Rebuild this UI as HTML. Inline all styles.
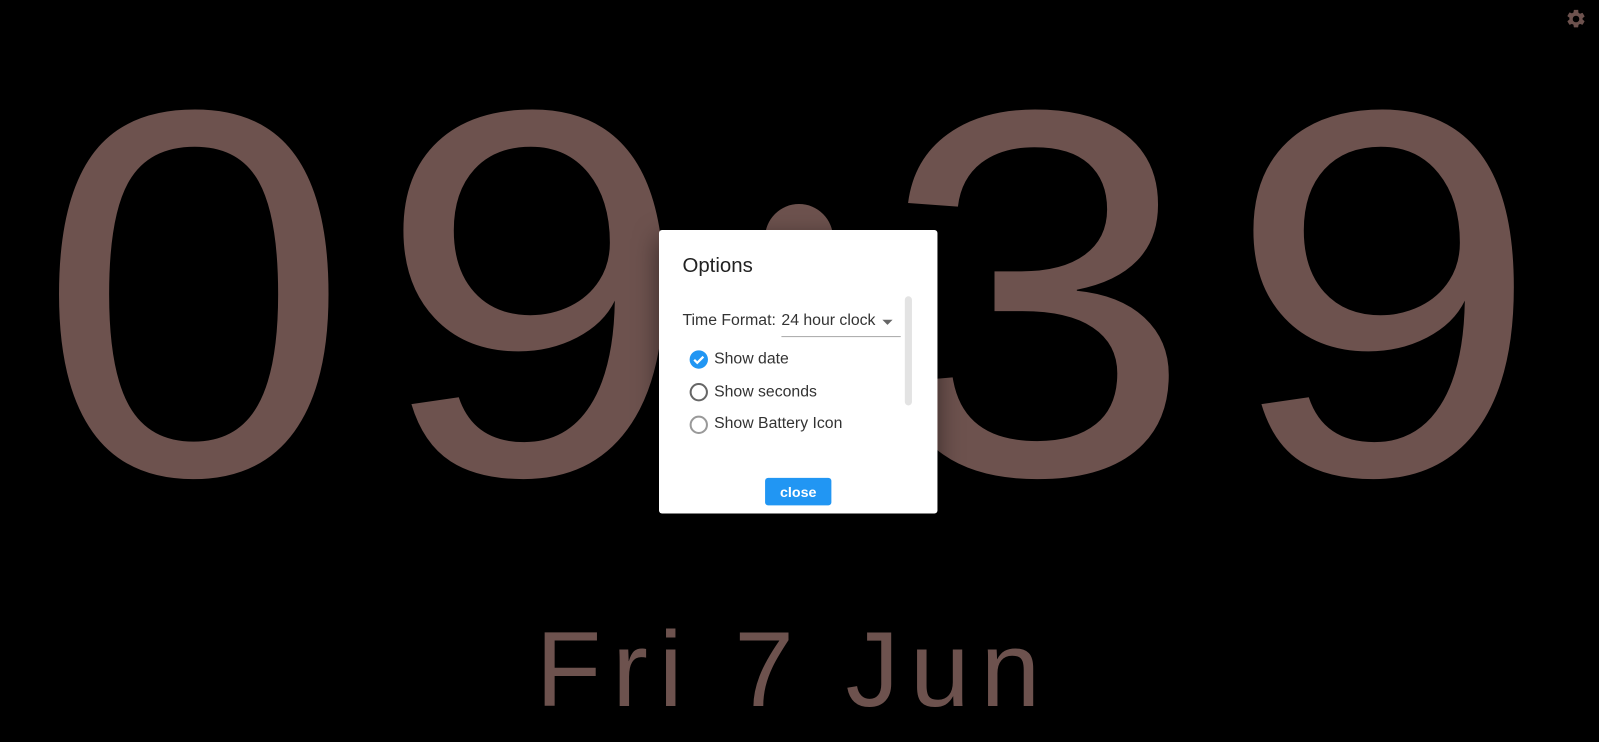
<!DOCTYPE html>
<html><head><meta charset="utf-8"><style>
html,body{margin:0;padding:0;background:#000;width:1599px;height:742px;overflow:hidden;font-family:"Liberation Sans",Roboto,sans-serif}
.d{position:absolute;color:#6d524e;font-size:522px;line-height:1;top:32px;transform:scaleX(1.08);transform-origin:0 0}
.dot{position:absolute;width:68px;height:68px;border-radius:50%;background:#6d524e;left:765px}
.date{position:absolute;left:0;width:1587px;text-align:center;top:611px;font-size:107px;color:#6d524e;letter-spacing:11px;line-height:1.1}
.dlg{position:absolute;left:659px;top:230px;width:273px;height:278px;background:#fff;border-radius:3px;box-shadow:0 8px 24px rgba(0,0,0,.5);color:#333;transform:scale(1.02);transform-origin:0 0}
.t{position:absolute;left:23px;top:24px;font-size:20px;color:#222}
.row{position:absolute;left:23px;font-size:15.5px;color:#333}
.sel{position:absolute;left:120px;top:80px;width:117px;height:24px;border-bottom:1px solid #aaa;font-size:15.5px}
.cb{position:absolute;left:30px;width:18px;height:18px;border-radius:50%;box-sizing:border-box}
.lbl{position:absolute;left:54px;font-size:15.5px;color:#333}
.sb{position:absolute;left:241px;top:65px;width:7px;height:107px;background:#e3e3e3;border-radius:4px}
.btn{position:absolute;left:104px;top:243px;width:65px;height:27px;background:#2196f3;color:#fff;border-radius:3px;font-size:14px;font-weight:bold;text-align:center;line-height:28px}
</style></head><body>
<div class="d" style="left:37px">0</div>
<div class="d" style="left:377px">9</div>
<div class="dot" style="top:204px"></div>
<div class="dot" style="top:420px"></div>
<div class="d" style="left:880px">3</div>
<div class="d" style="left:1227px">9</div>
<div class="date">Fri 7 Jun</div>
<svg style="position:absolute;left:1565px;top:8px" width="22" height="22" viewBox="0 0 24 24"><path fill="#6d524e" d="M19.14 12.94c.04-.3.06-.61.06-.94s-.02-.64-.07-.94l2.030-1.58a.49.49 0 0 0 .12-.61l-1.92-3.32a.49.49 0 0 0-.59-.22l-2.39.96c-.5-.38-1.03-.7-1.620-.94l-.36-2.54A.48.48 0 0 0 13.92 2h-3.84c-.24 0-.43.17-.47.41l-.36 2.54c-.59.24-1.13.57-1.62.94l-2.39-.96a.48.48 0 0 0-.59.22L2.74 8.47c-.12.21-.08.47.12.61l2.03 1.58c-.05.3-.09.63-.09.94s.02.64.07.94l-2.03 1.58a.49.49 0 0 0-.12.61l1.92 3.32c.12.22.37.29.59.22l2.39-.96c.5.38 1.03.7 1.62.94l.36 2.54c.05.24.24.41.48.41h3.84c.24 0 .44-.17.47-.41l.36-2.54c.59-.24 1.13-.56 1.62-.94l2.39.96c.22.08.47 0 .59-.22l1.92-3.32c.12-.22.07-.47-.12-.61l-2.01-1.58zM12 15.6A3.6 3.6 0 1 1 12 8.4a3.6 3.6 0 0 1 0 7.2z"/></svg>
<div class="dlg">
<div class="t">Options</div>
<div class="row" style="top:80px">Time Format:</div>
<div class="sel">24 hour clock<span style="position:absolute;right:8px;top:8px;border-left:5px solid transparent;border-right:5px solid transparent;border-top:5px solid #666"></span></div>
<div class="sb"></div>
<div class="cb" style="top:118px;background:#2196f3"><svg width="18" height="18" viewBox="0 0 18 18" style="position:absolute;left:0;top:0"><path d="M4.5 9.2l3 3 6-6" stroke="#fff" stroke-width="2.2" fill="none"/></svg></div>
<div class="lbl" style="top:118px">Show date</div>
<div class="cb" style="top:150px;border:2px solid #666"></div>
<div class="lbl" style="top:150px">Show seconds</div>
<div class="cb" style="top:182px;border:2px solid #999"></div>
<div class="lbl" style="top:181px">Show Battery Icon</div>
<div class="btn">close</div>
</div>
</body></html>
